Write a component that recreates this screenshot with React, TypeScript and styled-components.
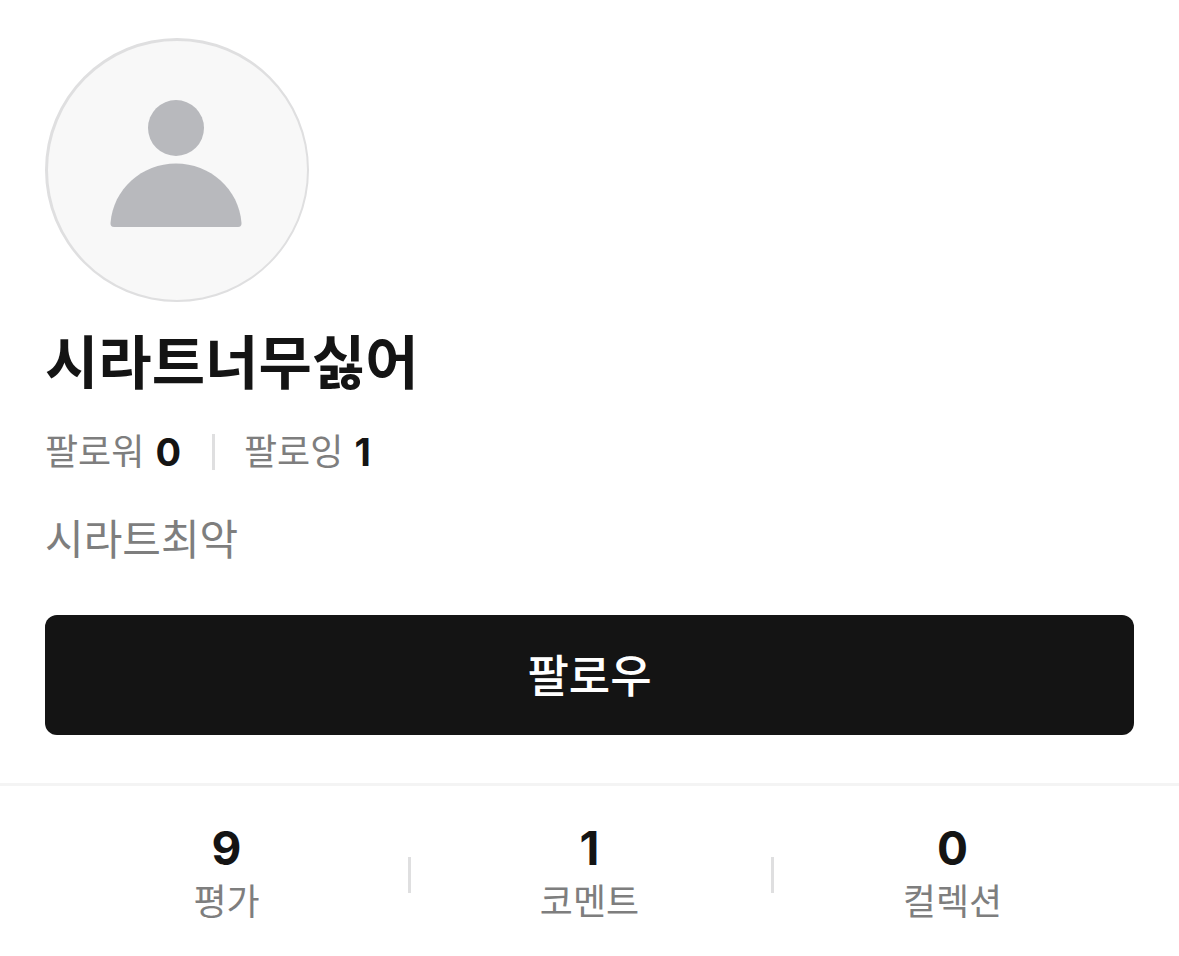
import React from "react";
import styled, { createGlobalStyle } from "styled-components";

const GlobalStyle = createGlobalStyle`
  * { box-sizing: border-box; }
  body {
    margin: 0;
    background: #ffffff;
    color: #141414;
    font-family: Inter, "Noto Sans CJK KR", sans-serif;
  }
`;

const Profile = styled.header`
  padding: 38px 45px 48px;
  border-bottom: 3px solid #f4f4f4;
`;

const Avatar = styled.div`
  width: 264px;
  height: 264px;
  border: solid #dfdfe0;
  border-width: 3px 2px 2px 3px;
  border-radius: 50%;
  background: #f8f8f8;
  overflow: hidden;

  svg { display: block; width: 100%; height: 100%; }
`;

const Name = styled.h1`
  margin: 22px 0 0;
  font-size: 58px;
  font-weight: 700;
  line-height: 78px;
`;

const Follows = styled.div`
  display: flex;
  align-items: center;
  margin-top: 24px;
`;

const FollowLink = styled.a`
  display: flex;
  align-items: center;
  gap: 11px;
  color: #7e7e7e;
  font-size: 36px;
  line-height: 52px;
  text-decoration: none;

  strong { color: #141414; font-size: 38px; font-weight: 700; }
`;

const Divider = styled.span`
  flex: none;
  width: 3px;
  height: 36px;
  background: #dfdfe0;
`;

const FollowDivider = styled(Divider)`
  margin: 0 29px 0 31px;
`;

/* Takes no room of its own, so the columns stay equal. */
const StatDivider = styled(Divider)`
  margin-right: -3px;
`;

const Bio = styled.p`
  margin: 32px 0 0;
  color: #7e7e7e;
  font-size: 42px;
  line-height: 60px;
`;

const FollowButton = styled.button`
  display: block;
  width: 100%;
  height: 120px;
  margin-top: 45px;
  padding: 0 0 4px;
  border: 0;
  border-radius: 12px;
  background: #141414;
  color: #ffffff;
  font-family: inherit;
  font-size: 45px;
  font-weight: 500;
  cursor: pointer;
`;

const Stats = styled.nav`
  display: flex;
  align-items: center;
  padding: 35px 45px;
`;

const Stat = styled.a`
  flex: 1;
  display: flex;
  flex-direction: column;
  align-items: center;
  color: #7e7e7e;
  font-size: 36px;
  line-height: 54px;
  text-decoration: none;

  strong { color: #141414; font-size: 46px; font-weight: 700; }
`;

const stats = [
  { label: "평가", count: 9 },
  { label: "코멘트", count: 1 },
  { label: "컬렉션", count: 0 },
];

export default function App() {
  return (
    <main>
      <GlobalStyle />
      <Profile>
        <Avatar>
          <svg viewBox="0 0 259 259" aria-hidden="true" fill="#b8b9bd">
            <circle cx="128" cy="87" r="28" />
            <path d="M66 186Q62.300 186 62.500 182C65 148 94 122.500 128 122.500S191 148 193.500 182Q193.700 186 190 186Z" />
          </svg>
        </Avatar>
        <Name>시라트너무싫어</Name>
        <Follows>
          <FollowLink href="#followers">팔로워 <strong>0</strong></FollowLink>
          <FollowDivider />
          <FollowLink href="#followings">팔로잉 <strong>1</strong></FollowLink>
        </Follows>
        <Bio>시라트최악</Bio>
        <FollowButton type="button">팔로우</FollowButton>
      </Profile>
      <Stats>
        {stats.map(({ label, count }, index) => (
          <React.Fragment key={label}>
            {index > 0 && <StatDivider />}
            <Stat href={"#" + label}>
              <strong>{count}</strong>
              {label}
            </Stat>
          </React.Fragment>
        ))}
      </Stats>
    </main>
  );
}
